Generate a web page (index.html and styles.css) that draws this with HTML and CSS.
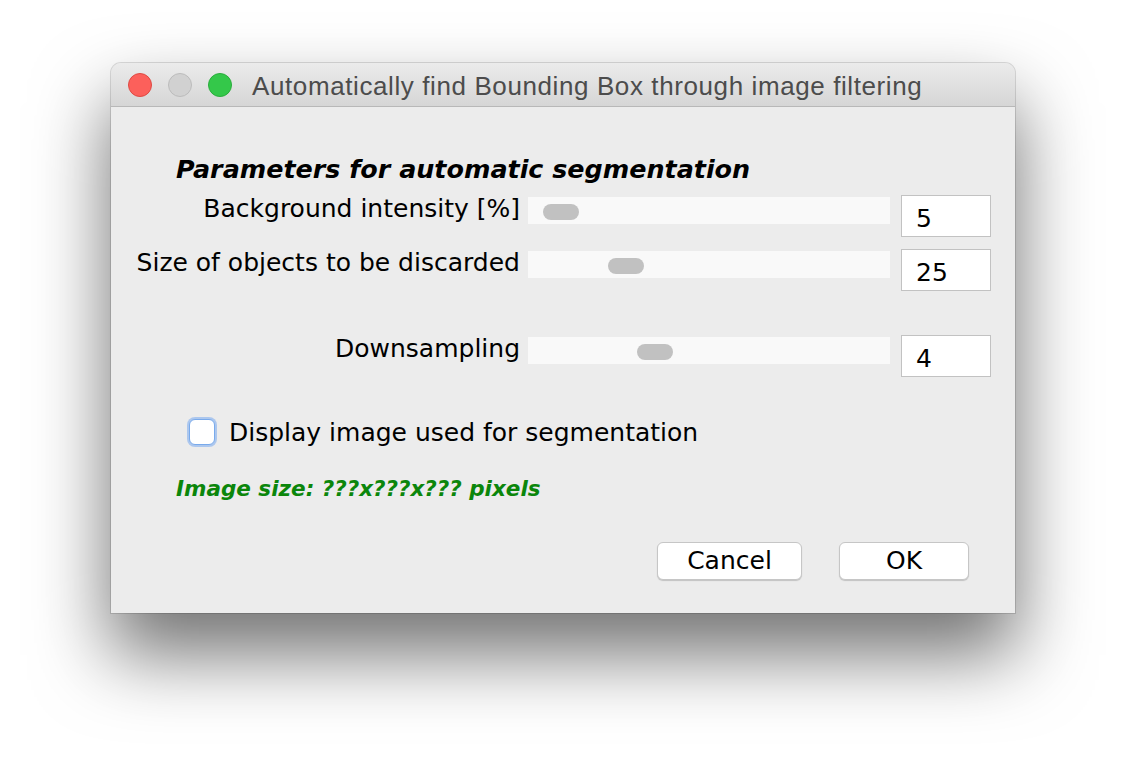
FILE: index.html
```html
<!DOCTYPE html>
<html>
<head>
<meta charset="utf-8">
<link rel="stylesheet" href="styles.css">
</head>
<body>
<div class="window">
  <div class="titlebar">
    <span class="light red"></span>
    <span class="light gray"></span>
    <span class="light green"></span>
    <span class="title">Automatically find Bounding Box through image filtering</span>
  </div>
  <div class="content">
    <h1 class="heading">Parameters for automatic segmentation</h1>
    <div class="form">
      <div class="row">
        <label class="label">Background intensity [%]</label>
        <div class="track"><span class="thumb" style="margin-left:15px"></span></div>
        <div class="field">5</div>
      </div>
      <div class="row">
        <label class="label">Size of objects to be discarded</label>
        <div class="track"><span class="thumb" style="margin-left:80px"></span></div>
        <div class="field">25</div>
      </div>
      <div class="row spaced">
        <label class="label">Downsampling</label>
        <div class="track"><span class="thumb" style="margin-left:109px"></span></div>
        <div class="field">4</div>
      </div>
    </div>
    <div class="check-row">
      <span class="checkbox"></span>
      <span class="check-label">Display image used for segmentation</span>
    </div>
    <p class="status">Image size: ???x???x??? pixels</p>
    <div class="buttons">
      <button class="btn cancel">Cancel</button>
      <button class="btn ok">OK</button>
    </div>
  </div>
</div>
</body>
</html>
```
FILE: styles.css
```css
html, body {
  margin: 0;
  padding: 0;
  background: #ffffff;
}
body {
  width: 1126px;
  height: 774px;
  overflow: hidden;
  font-family: "DejaVu Sans", "Liberation Sans", sans-serif;
  color: #000;
}
.window {
  margin: 63px 0 0 111px;
  width: 904px;
  background: #ececec;
  border-radius: 10px 10px 0 0;
  box-shadow: 0 0 0 1px rgba(0,0,0,0.13), 0 40px 75px 2px rgba(0,0,0,0.55);
}
.titlebar {
  height: 43px;
  border-bottom: 1px solid #b8b8b8;
  border-radius: 10px 10px 0 0;
  background: linear-gradient(#ebebeb, #d6d6d6);
  display: flex;
  align-items: center;
  padding-left: 17px;
}
.light {
  width: 24px;
  height: 24px;
  border-radius: 50%;
  box-sizing: border-box;
  margin-right: 16px;
  flex: none;
}
.light.red { background: #fc605b; border: 1px solid #de4a43; }
.light.gray { background: #d1d1d1; border: 1px solid #bcbcbc; }
.light.green { background: #34c84a; border: 1px solid #2aad3c; margin-right: 20px; }
.title {
  font-family: "Liberation Sans", Arial, sans-serif;
  font-size: 26px;
  letter-spacing: 0.6px;
  color: #4c4c4c;
  line-height: 30px;
  padding-top: 2px;
  white-space: nowrap;
}
.content {
  padding: 47px 0 33px 0;
}
.heading {
  margin: 0 0 0 65px;
  font-size: 25.4px;
  font-weight: bold;
  font-style: italic;
  line-height: 30px;
}
.form {
  margin-top: 11px;
}
.row {
  display: flex;
  align-items: flex-start;
  height: 42px;
}
.row > * {
  flex: none;
}
.row + .row {
  margin-top: 12px;
}
.row.spaced {
  margin-top: 44px;
}
.label {
  width: 409px;
  padding-right: 8px;
  text-align: right;
  font-size: 25px;
  line-height: 27px;
  margin-top: 0;
  white-space: nowrap;
}
.track {
  width: 362px;
  height: 27px;
  margin-top: 2px;
  box-sizing: border-box;
  padding-top: 3px;
  background: #f9f9f9;
  display: flex;
  align-items: center;
}
.thumb {
  width: 36px;
  height: 16px;
  border-radius: 8px;
  background: #c1c1c1;
}
.field {
  margin-left: 11px;
  width: 90px;
  height: 42px;
  box-sizing: border-box;
  border: 1px solid #c2c2c2;
  background: #fff;
  padding: 6px 0 0 14px;
  font-size: 25px;
  line-height: 34px;
}
.check-row {
  margin: 40px 0 0 76px;
  height: 30px;
  display: flex;
  align-items: center;
}
.checkbox {
  width: 26px;
  height: 26px;
  box-sizing: border-box;
  border-radius: 6px;
  background: #fff;
  border: 1px solid #79aaeb;
  box-shadow: 0 0 0 2px rgba(120, 170, 240, 0.55);
  margin-left: 2px;
  margin-right: 14px;
  flex: none;
}
.check-label {
  font-size: 25px;
  line-height: 30px;
  padding-top: 2px;
  white-space: nowrap;
}
.status {
  margin: 29px 0 0 65px;
  font-size: 21.5px;
  font-weight: bold;
  font-style: italic;
  line-height: 26px;
  color: #0b860b;
}
.buttons {
  margin: 40px 46px 0 0;
  display: flex;
  justify-content: flex-end;
  gap: 37px;
}
.btn {
  height: 38px;
  box-sizing: border-box;
  background: #fff;
  border: 1px solid #c6c6c6;
  border-radius: 6px;
  box-shadow: 0 1px 1px rgba(0,0,0,0.18);
  font-family: "DejaVu Sans", sans-serif;
  font-size: 25px;
  line-height: 34px;
  color: #000;
  padding: 0;
}
.btn.cancel { width: 145px; }
.btn.ok { width: 130px; }
```
